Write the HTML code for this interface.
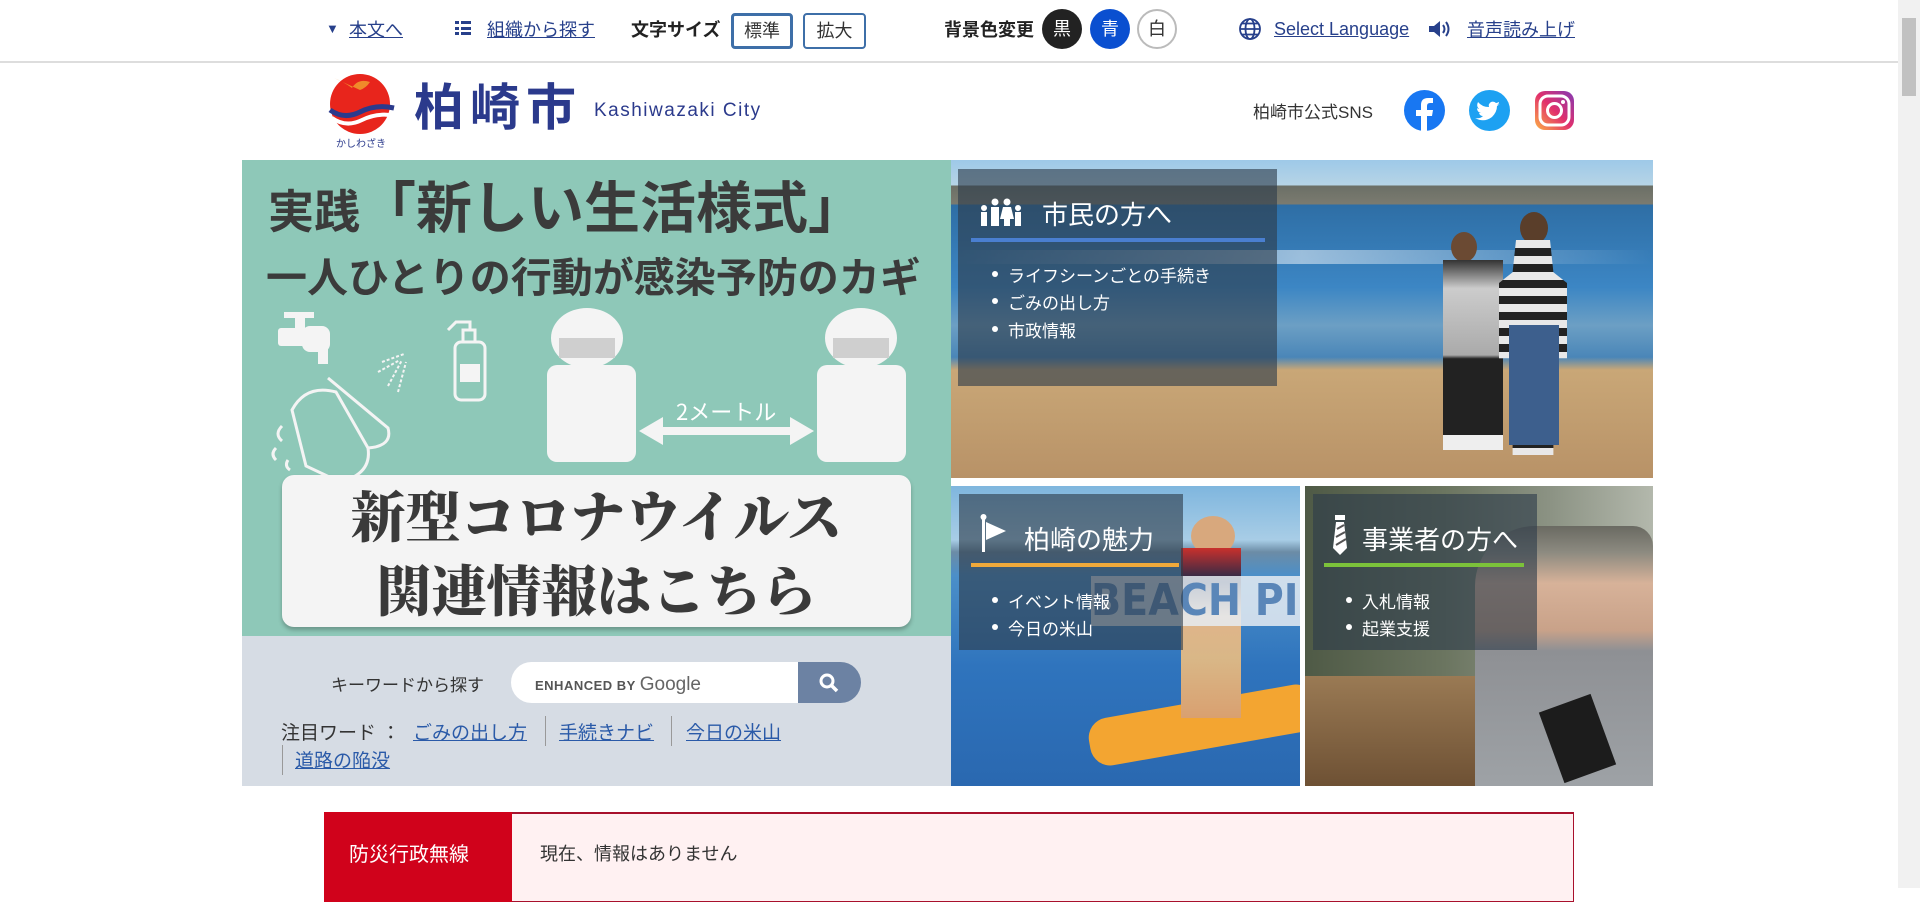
<!DOCTYPE html>
<html lang="ja"><head><meta charset="utf-8">
<style>
*{margin:0;padding:0;box-sizing:border-box}
body{width:1920px;height:888px;overflow:hidden;background:#fff;font-family:"Liberation Sans","Noto Sans CJK JP",sans-serif;color:#333;position:relative}
.a{position:absolute;white-space:nowrap}
a,.lk{color:#27408b;text-decoration:underline}
.top{font-size:18px;top:16px}
.btn{position:absolute;top:13px;height:36px;border:2px solid #3e6fa8;border-radius:4px;font-size:18px;text-align:center;line-height:32px;color:#333}
.circ{position:absolute;top:9px;width:40px;height:40px;border-radius:50%;font-size:18px;text-align:center;line-height:40px}
.ov{position:absolute;background:rgba(45,60,75,.62)}
.tt{position:absolute;color:#fff;font-size:26px}
.li{position:absolute;color:#fff;font-size:17px}
.li:before{content:"";position:absolute;left:-16px;top:9px;width:6px;height:6px;border-radius:50%;background:#fff}
</style></head><body>
<!-- top bar -->
<div class="a top" style="left:326px;font-size:13px;top:21px;color:#27408b">▼</div>
<div class="a top lk" style="left:349px">本文へ</div>
<svg class="a" style="left:455px;top:20px" width="16" height="16"><rect x="0" y="1" width="4" height="3" fill="#27408b"/><rect x="0" y="7" width="4" height="3" fill="#27408b"/><rect x="0" y="12" width="4" height="3" fill="#27408b"/><rect x="6" y="1" width="10" height="3" fill="#27408b"/><rect x="6" y="7" width="10" height="3" fill="#27408b"/><rect x="6" y="12" width="10" height="3" fill="#27408b"/></svg>
<div class="a top lk" style="left:487px">組織から探す</div>
<div class="a top" style="left:631px;font-weight:bold;color:#222">文字サイズ</div>
<div class="btn" style="left:731px;width:62px;border-width:3px;line-height:30px">標準</div>
<div class="btn" style="left:803px;width:63px">拡大</div>
<div class="a top" style="left:944px;font-weight:bold;color:#222">背景色変更</div>
<div class="circ" style="left:1042px;background:#222;color:#fff">黒</div>
<div class="circ" style="left:1090px;background:#0a4fd0;color:#fff">青</div>
<div class="circ" style="left:1137px;background:#fff;border:2px solid #bbb;color:#333;line-height:36px">白</div>
<svg class="a" style="left:1238px;top:17px" width="24" height="24" viewBox="0 0 24 24" fill="none" stroke="#27408b" stroke-width="1.8"><circle cx="12" cy="12" r="10"/><ellipse cx="12" cy="12" rx="4.5" ry="10"/><path d="M2 12h20M4 6.5h16M4 17.5h16"/></svg>
<div class="a top lk" style="left:1274px;top:19px">Select Language</div>
<svg class="a" style="left:1428px;top:19px" width="24" height="20" viewBox="0 0 24 20"><path d="M1 7h5l6-5v16l-6-5H1z" fill="#27408b"/><path d="M15 6q3 4 0 8M18 3q5 7 0 14" stroke="#27408b" stroke-width="2" fill="none"/></svg>
<div class="a top lk" style="left:1467px">音声読み上げ</div>
<div class="a" style="left:0;top:61px;width:1898px;height:2px;background:#ddd"></div>
<!-- scrollbar -->
<div class="a" style="left:1898px;top:0;width:22px;height:888px;background:#f1f1f1"></div>
<div class="a" style="left:1902px;top:18px;width:14px;height:78px;background:#c1c1c1"></div>
<!-- logo -->
<svg class="a" style="left:326px;top:70px" width="76" height="80" viewBox="0 0 76 80"><circle cx="34" cy="34" r="30" fill="#e8251c"/><path d="M8 8q10 4 18 10 6-10 18-6-4 6-10 8z" fill="#f08a2a"/><path d="M4 40q14 10 30 2t34-4" stroke="#2b3a8c" stroke-width="5" fill="none"/><path d="M6 48q14 10 30 2t34-4" stroke="#fff" stroke-width="4" fill="none"/><text x="10" y="77" font-size="10" fill="#2b3a8c" font-family="Noto Sans CJK JP">かしわざき</text></svg>
<div class="a" style="left:414px;top:78px;font-size:50px;font-weight:bold;color:#2b3a8c;letter-spacing:6px;line-height:60px">柏崎市</div>
<div class="a" style="left:594px;top:100px;font-size:19px;color:#2b3a8c;letter-spacing:1.5px">Kashiwazaki City</div>
<div class="a" style="left:1253px;top:98px;font-size:17px;color:#333">柏崎市公式SNS</div>
<svg class="a" style="left:1404px;top:90px" width="41" height="41" viewBox="0 0 41 41"><circle cx="20.5" cy="20.5" r="20.5" fill="#1877f2"/><path d="M23 41V26h5l1-6h-6v-4q0-3 3-3h3V8h-5q-7 0-7 7v5h-5v6h5v15z" fill="#fff"/></svg>
<svg class="a" style="left:1469px;top:90px" width="41" height="41" viewBox="0 0 41 41"><circle cx="20.5" cy="20.5" r="20.5" fill="#1da1f2"/><path d="M31 14q-2 1-3 1 2-1 2-3-2 1-3 1-2-2-5-1-3 2-2 5-7 0-11-5-2 4 1 7-1 0-2-1 0 4 4 5h-2q1 3 4 3-3 3-8 2 9 5 17-1 5-5 5-11z" fill="#fff"/></svg>
<svg class="a" style="left:1534px;top:90px" width="41" height="41" viewBox="0 0 41 41"><defs><linearGradient id="ig" x1="0" y1="1" x2="1" y2="0"><stop offset="0" stop-color="#fdb045"/><stop offset=".5" stop-color="#e1306c"/><stop offset="1" stop-color="#833ab4"/></linearGradient></defs><rect x="1" y="1" width="39" height="39" rx="10" fill="url(#ig)"/><rect x="6" y="6" width="29" height="29" rx="8" fill="none" stroke="#fff" stroke-width="3"/><circle cx="20.5" cy="20.5" r="7" fill="none" stroke="#fff" stroke-width="3"/><circle cx="29" cy="12" r="2" fill="#fff"/></svg>
<!-- banner -->
<div class="a" style="left:242px;top:160px;width:709px;height:476px;background:#8ec8b8;overflow:hidden">
 <div class="a" style="left:26px;top:14px;font-weight:bold;color:#3b3b3b;line-height:70px"><span style="font-size:46px">実践</span><span style="font-size:56px">「新しい生活様式」</span></div>
 <div class="a" style="left:24px;top:90px;font-weight:bold;color:#3b3b3b;font-size:41px;line-height:56px">一人ひとりの行動が感染予防のカギ</div>
 <svg class="a" style="left:0;top:140px" width="709" height="200">
  <g fill="#f4f4f4"><rect x="42" y="12" width="30" height="6"/><rect x="36" y="28" width="38" height="18" rx="3"/><rect x="53" y="14" width="10" height="20"/><rect x="60" y="26" width="28" height="26" rx="8"/><rect x="76" y="48" width="10" height="16"/></g>
  <g stroke="#f4f4f4" stroke-width="3" fill="none"><path d="M50 110q14-26 44-18l32 56q4 26-28 34l-34-16z"/><path d="M86 78l60 50q5 18-20 20"/><path d="M40 126q-8 8 0 15M34 148q-6 6 0 12M46 160q-4 6 2 10"/><path d="M140 62l22-8M136 72l22-12M146 86l14-26M156 92l8-30" stroke-dasharray="3 2" stroke-width="2"/><rect x="213" y="42" width="30" height="58" rx="6"/><path d="M221 42v-12h12v12M228 30v-8h-14l-8 8"/></g>
  <rect x="218" y="64" width="20" height="18" fill="#f4f4f4"/>
  <g fill="#f4f4f4"><ellipse cx="345" cy="38" rx="36" ry="30"/><rect x="305" y="65" width="89" height="97" rx="10"/><ellipse cx="619" cy="38" rx="36" ry="30"/><rect x="575" y="65" width="89" height="97" rx="10"/></g>
  <rect x="317" y="38" width="56" height="20" fill="#cfcfcf"/><rect x="591" y="38" width="56" height="20" fill="#cfcfcf"/>
  <path d="M397 131l24-14v10h127v-10l24 14-24 14v-10h-127v10z" fill="#f4f4f4"/>
  <text x="434" y="120" font-size="22" fill="#fff" font-family="Noto Sans CJK JP">2メートル</text>
 </svg>
 <div class="a" style="left:40px;top:315px;width:629px;height:152px;background:#f4f4f4;border-radius:12px;box-shadow:0 3px 4px rgba(0,0,0,.25)"></div>
 <div class="a" style="left:40px;top:322px;width:629px;text-align:center;font-family:'Liberation Serif','Noto Serif CJK SC',serif;font-weight:900;font-size:55px;color:#3a3a3a;line-height:74px">新型コロナウイルス<br>関連情報はこちら</div>
</div>
<!-- search -->
<div class="a" style="left:242px;top:636px;width:709px;height:150px;background:#d6dce4"></div>
<div class="a" style="left:331px;top:671px;font-size:17px;color:#333">キーワードから探す</div>
<div class="a" style="left:511px;top:662px;width:330px;height:41px;background:#fff;border-radius:21px"></div>
<div class="a" style="left:535px;top:674px;font-size:13px;color:#555;font-weight:bold;letter-spacing:.5px">ENHANCED BY <span style="font-size:19px;color:#666;font-weight:normal;letter-spacing:0">Google</span></div>
<div class="a" style="left:798px;top:662px;width:63px;height:41px;background:#6c82a3;border-radius:0 21px 21px 0"></div>
<svg class="a" style="left:818px;top:672px" width="22" height="22" viewBox="0 0 22 22"><circle cx="9" cy="9" r="6" stroke="#fff" stroke-width="3" fill="none"/><path d="M13 13l6 6" stroke="#fff" stroke-width="3.5"/></svg>
<div class="a" style="left:281px;top:718px;font-size:19px;color:#333">注目ワード ：</div>
<div class="a lk" style="left:413px;top:718px;font-size:19px;color:#2a5aa8">ごみの出し方</div>
<div class="a" style="left:545px;top:716px;width:1px;height:30px;background:#999"></div>
<div class="a lk" style="left:559px;top:718px;font-size:19px;color:#2a5aa8">手続きナビ</div>
<div class="a" style="left:671px;top:716px;width:1px;height:30px;background:#999"></div>
<div class="a lk" style="left:686px;top:718px;font-size:19px;color:#2a5aa8">今日の米山</div>
<div class="a" style="left:282px;top:745px;width:1px;height:30px;background:#999"></div>
<div class="a lk" style="left:295px;top:746px;font-size:19px;color:#2a5aa8">道路の陥没</div>
<!-- top photo -->
<div class="a" style="left:951px;top:160px;width:702px;height:318px;overflow:hidden;background:linear-gradient(#9ec9e8 0,#b6d4e6 8%,#6b6f66 8%,#7b7b70 14%,#2e6ea5 14%,#3c86c4 40%,#6c9fc4 52%,#4a86b8 62%,#c9a777 66%,#b89267 100%)">
 <div class="a" style="left:0;top:90px;width:702px;height:14px;background:linear-gradient(90deg,transparent,rgba(255,255,255,.5),transparent)"></div>
 <div class="a" style="left:500px;top:72px;width:26px;height:30px;border-radius:50%;background:#6b4a33"></div>
 <div class="a" style="left:492px;top:100px;width:60px;height:190px;background:linear-gradient(#333 0,#ccc 15%,#aaa 50%,#222 52%,#222 92%,#eee 92%)"></div>
 <div class="a" style="left:569px;top:52px;width:28px;height:32px;border-radius:50%;background:#5a3e2a"></div>
 <div class="a" style="left:548px;top:80px;width:68px;height:215px;background:repeating-linear-gradient(#e8e8e8 0,#e8e8e8 8px,#222 8px,#222 16px);clip-path:polygon(25% 0,75% 0,80% 15%,100% 20%,100% 55%,80% 55%,80% 100%,20% 100%,20% 55%,0 55%,0 20%,20% 15%)"></div>
 <div class="a" style="left:558px;top:165px;width:50px;height:120px;background:#3d5f8d"></div>
</div>
<div class="ov" style="left:958px;top:169px;width:319px;height:217px"></div>
<svg class="a" style="left:978px;top:198px" width="46" height="28" viewBox="0 0 46 28" fill="#fff"><circle cx="6" cy="10" r="3"/><rect x="3" y="14" width="6" height="14"/><circle cx="17" cy="4" r="3.5"/><rect x="13" y="9" width="8" height="19"/><circle cx="29" cy="4" r="3.5"/><path d="M25 9h8l3 12h-4v7h-6v-7h-4z"/><circle cx="40" cy="10" r="3"/><rect x="37" y="14" width="6" height="14"/></svg>
<div class="tt" style="left:1042px;top:195px">市民の方へ</div>
<div class="a" style="left:971px;top:238px;width:294px;height:4px;background:#4a7fd0"></div>
<div class="li" style="left:1008px;top:262px">ライフシーンごとの手続き</div>
<div class="li" style="left:1008px;top:289px">ごみの出し方</div>
<div class="li" style="left:1008px;top:317px">市政情報</div>
<!-- bottom left photo -->
<div class="a" style="left:951px;top:486px;width:349px;height:300px;overflow:hidden;background:linear-gradient(#7fb6de 0,#a8cde6 18%,#6c8ca6 22%,#4b8fc9 30%,#2f74bd 60%,#2a68b0 100%)">
 <div class="a" style="left:137px;top:215px;width:230px;height:48px;background:#f3a531;border-radius:20px;transform:rotate(-10deg)"></div>
 <div class="a" style="left:240px;top:30px;width:44px;height:40px;border-radius:50%;background:#d8a87d"></div>
 <div class="a" style="left:230px;top:62px;width:60px;height:170px;background:linear-gradient(#c9302c 0,#1d2a4a 20%,#e0b48a 40%,#d9b787 65%,#d9a070 100%)"></div>
 <div class="a" style="left:140px;top:90px;width:210px;height:50px;background:rgba(230,236,242,.85);color:#5a86b8;font-size:44px;font-weight:bold;line-height:50px;font-family:'DejaVu Sans Condensed',sans-serif;overflow:hidden">BEACH PICNIC</div>
</div>
<div class="ov" style="left:959px;top:494px;width:224px;height:156px"></div>
<svg class="a" style="left:980px;top:514px" width="30" height="38" viewBox="0 0 30 38" fill="#fff"><rect x="2" y="2" width="3" height="36"/><circle cx="3.5" cy="3" r="3"/><path d="M6 8l20 9-20 9z"/></svg>
<div class="tt" style="left:1024px;top:520px">柏崎の魅力</div>
<div class="a" style="left:971px;top:563px;width:208px;height:4px;background:#f0a93a"></div>
<div class="li" style="left:1008px;top:588px">イベント情報</div>
<div class="li" style="left:1008px;top:615px">今日の米山</div>
<!-- bottom right photo -->
<div class="a" style="left:1305px;top:486px;width:348px;height:300px;overflow:hidden;background:linear-gradient(90deg,#4f5a46 0,#6b7560 40%,#8b9283 70%,#b3b8ac 100%)">
 <div class="a" style="left:0;top:190px;width:170px;height:110px;background:linear-gradient(#9a7a54,#6e5134)"></div>
 <div class="a" style="left:170px;top:40px;width:178px;height:260px;background:linear-gradient(#6a6a62 0,#8c8a80 10%,#d7b299 22%,#c9a289 40%,#8e9094 48%,#9ea2a6 100%);border-radius:60px 20px 0 0"></div>
 <div class="a" style="left:245px;top:215px;width:55px;height:75px;background:#1c1c1c;transform:rotate(-20deg)"></div>
</div>
<div class="ov" style="left:1313px;top:494px;width:224px;height:156px"></div>
<svg class="a" style="left:1332px;top:515px" width="16" height="40" viewBox="0 0 16 40" fill="#fff"><rect x="3" y="0" width="10" height="5"/><path d="M4 7h8l3 26-7 7-7-7z"/><path d="M5 14l7-4M4 22l9-5M4 30l10-6" stroke="#555" stroke-width="2"/></svg>
<div class="tt" style="left:1362px;top:520px">事業者の方へ</div>
<div class="a" style="left:1324px;top:563px;width:200px;height:4px;background:#7cc23a"></div>
<div class="li" style="left:1362px;top:588px">入札情報</div>
<div class="li" style="left:1362px;top:615px">起業支援</div>
<!-- disaster -->
<div class="a" style="left:324px;top:812px;width:1250px;height:90px;background:#fff1f2;border:1px solid #a8102c;border-top:2px solid #a8102c"></div>
<div class="a" style="left:324px;top:812px;width:188px;height:90px;background:#d0021b"></div>
<div class="a" style="left:349px;top:838px;font-size:20px;color:#fff">防災行政無線</div>
<div class="a" style="left:540px;top:840px;font-size:18px;color:#333">現在、情報はありません</div>
</body></html>
